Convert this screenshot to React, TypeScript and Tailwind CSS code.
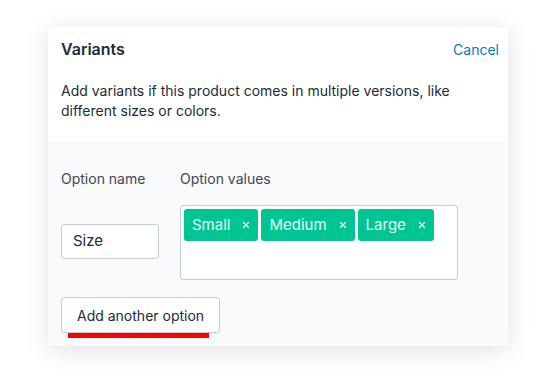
import { X } from "lucide-react";

const TAGS = ["Small", "Medium", "Large"];

export default function App() {
  return (
    <div className="w-[547px] h-[376px] bg-white pt-[27px] pl-[48px] font-['Inter',sans-serif] text-[#212b36]">
      <div className="w-[460px] bg-white shadow-[0_4px_24px_rgba(0,0,0,0.12)]">
        {/* Header */}
        <div className="px-[13px] pt-[12px] pb-[20px]">
          <div className="flex items-center justify-between h-[20px]">
            <h2 className="text-[16px] font-semibold">Variants</h2>
            <a className="text-[14px] text-[#007ace] mr-[-4px]">Cancel</a>
          </div>
          <p className="mt-[22px] text-[14px] leading-[20px]">
            Add variants if this product comes in multiple versions, like different sizes or colors.
          </p>
        </div>

        {/* Options */}
        <div className="bg-[#f9fafb] px-[13px] pt-[28px] pb-[13px]">
          <div className="flex gap-[21px]">
            <div className="flex flex-col">
              <span className="text-[14px] leading-[20px] text-[#3e4754]">Option name</span>
              <div className="mt-[35px] w-[98px] h-[35px] bg-white border border-[#c4cdd5] rounded-[3px] px-[11px] flex items-center text-[15px]">
                Size
              </div>
            </div>
            <div className="flex flex-col">
              <span className="text-[14px] leading-[20px] text-[#3e4754]">Option values</span>
              <div className="mt-[16px] w-[278px] h-[75px] bg-white border border-[#c4cdd5] rounded-[3px] p-[3px] flex items-start gap-[3px]">
                {TAGS.map((t) => (
                  <span
                    key={t}
                    className="h-[32px] bg-[#00c593] text-[#e6fbf4] rounded-[3px] pl-[8px] pr-[7px] flex items-center gap-[11px] text-[15px]"
                  >
                    {t}
                    <X size={10} strokeWidth={3} />
                  </span>
                ))}
              </div>
            </div>
          </div>

          <div className="relative mt-[17px] w-fit">
            <button className="h-[36px] px-[15px] bg-white border border-[#c4cdd5] rounded-[3px] text-[14px] text-[#212b36] shadow-[0_1px_0_rgba(22,29,37,0.05)]">
              Add another option
            </button>
            <div className="absolute left-[7px] top-[36px] w-[141px] h-[5px] bg-[#ff0000]" />
          </div>
        </div>
      </div>
    </div>
  );
}
